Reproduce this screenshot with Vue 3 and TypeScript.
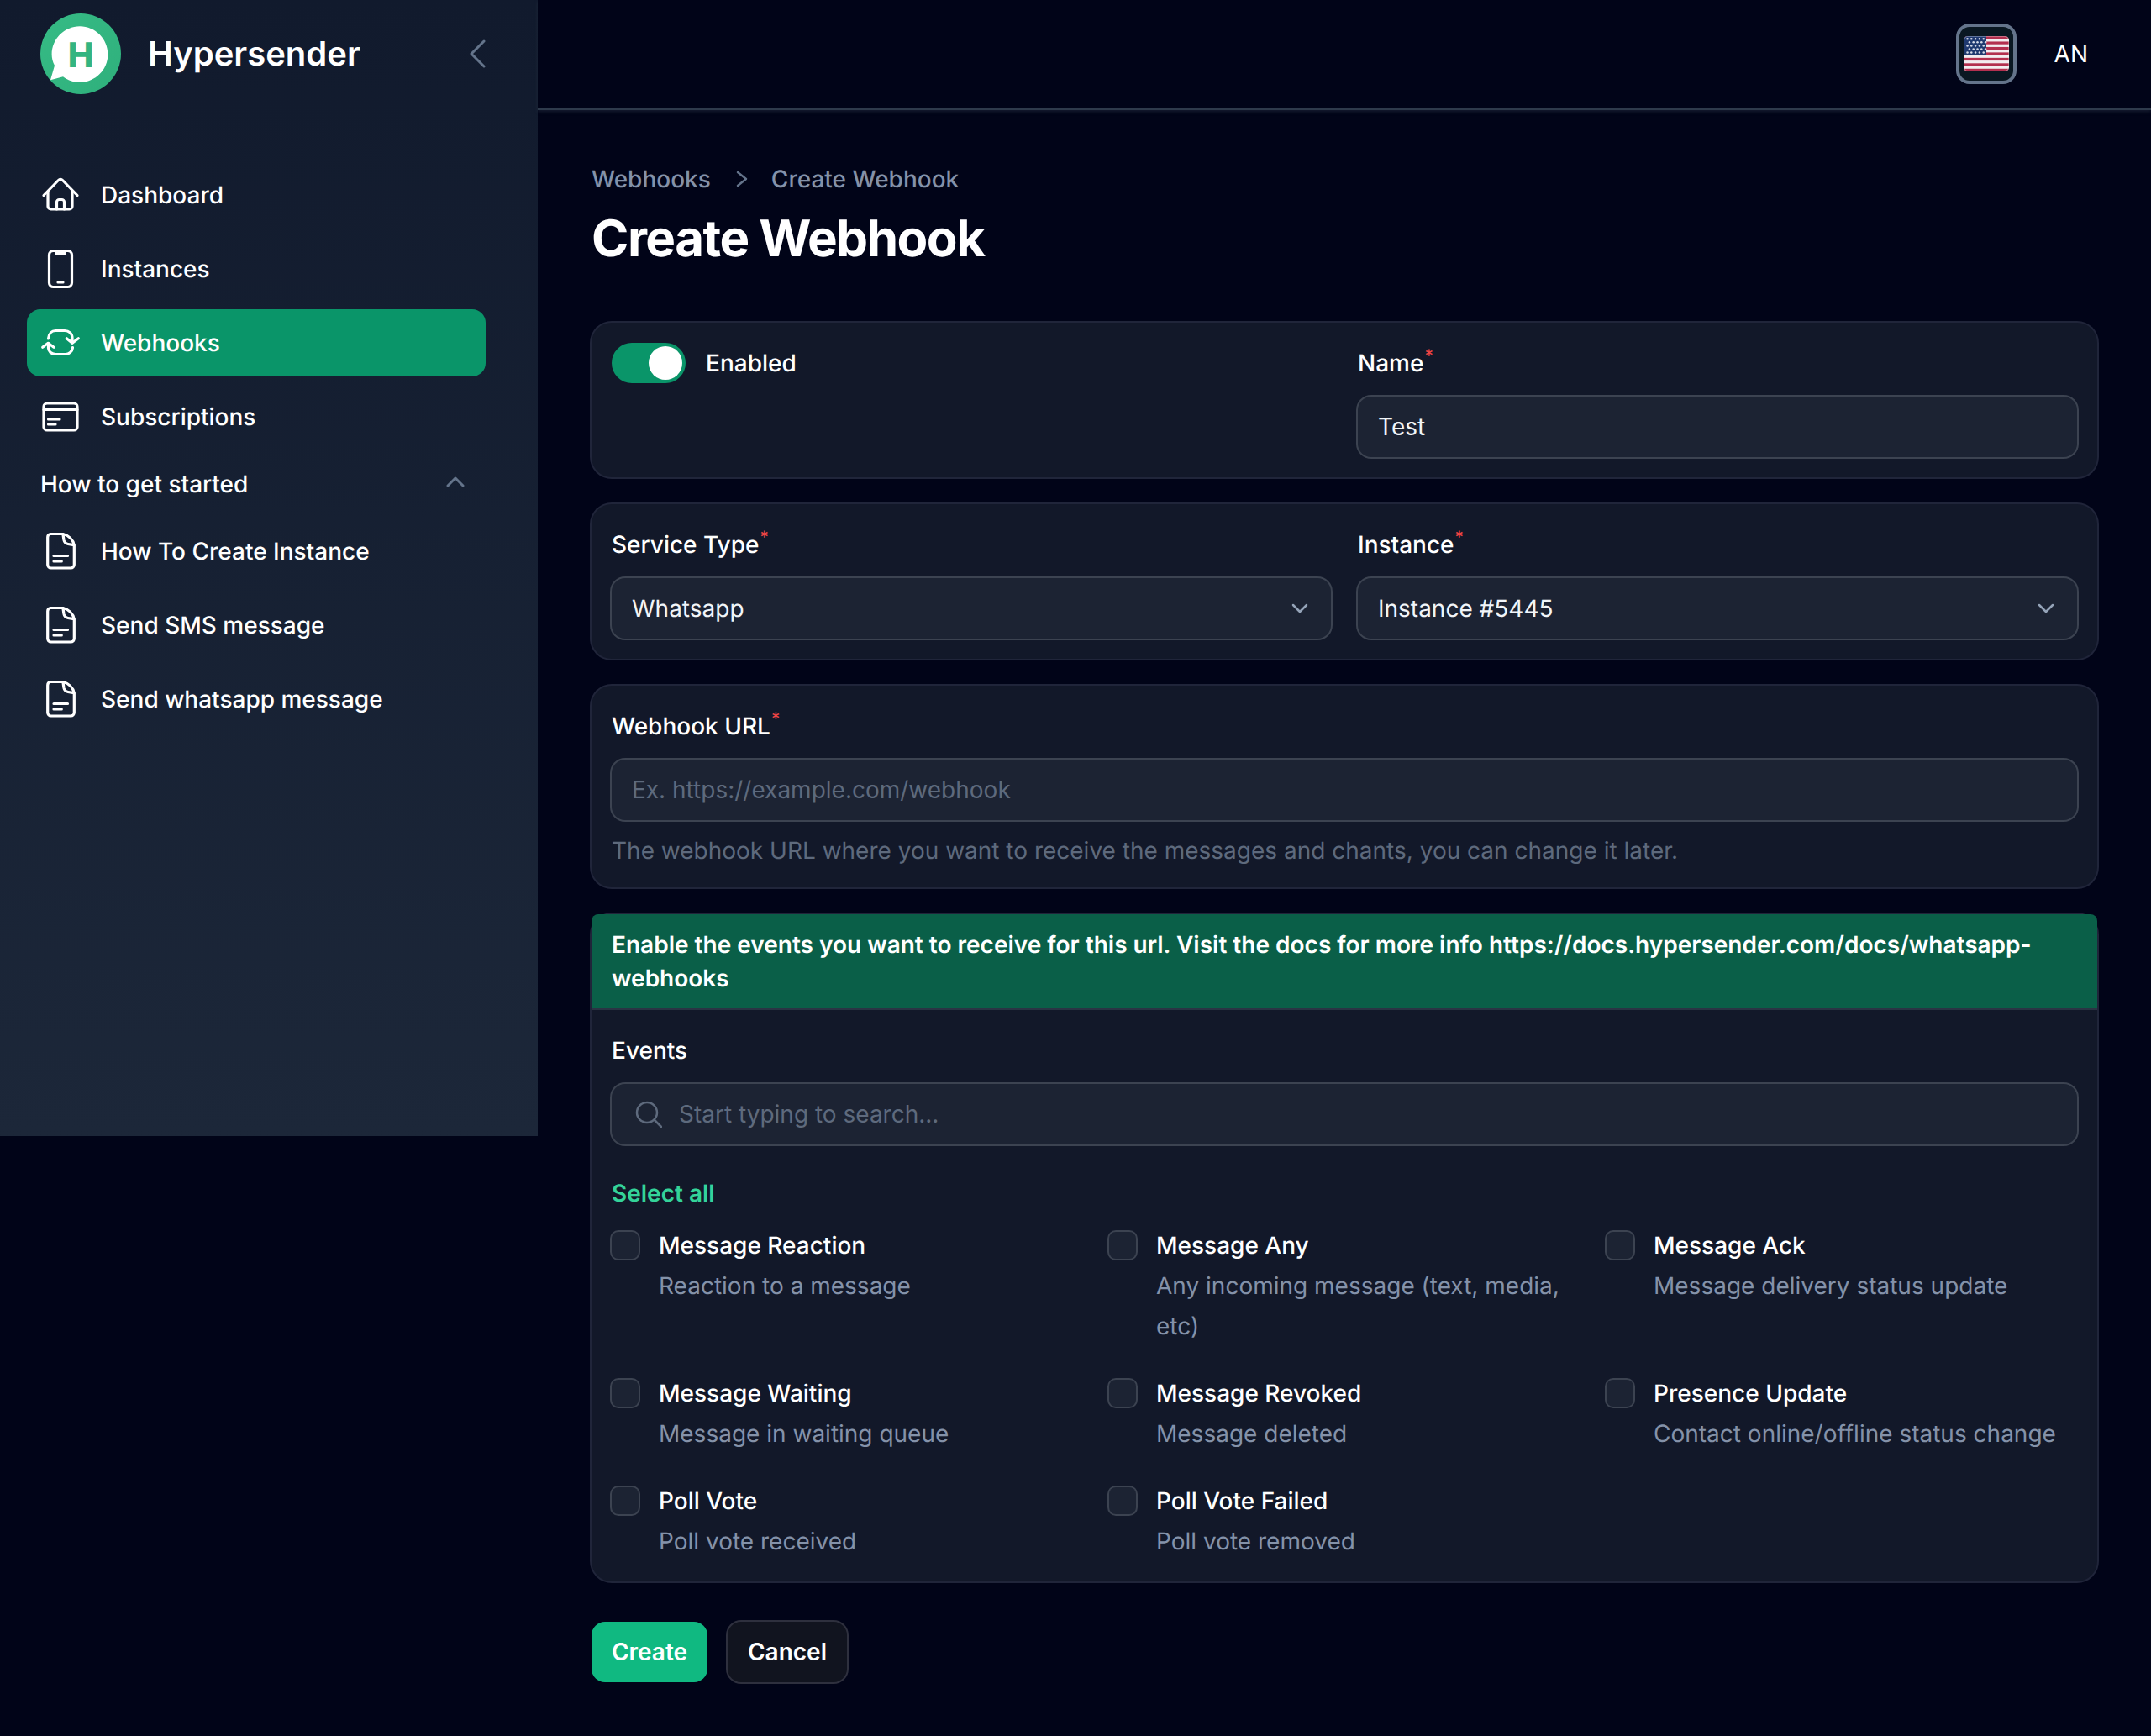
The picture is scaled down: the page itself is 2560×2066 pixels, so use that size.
<script setup lang="ts">
interface NavItem { label: string; icon: 'home' | 'phone' | 'sync' | 'card' | 'doc'; active?: boolean }
interface EventItem { title: string; desc: string }

const mainNav: NavItem[] = [
  { label: 'Dashboard', icon: 'home' },
  { label: 'Instances', icon: 'phone' },
  { label: 'Webhooks', icon: 'sync', active: true },
  { label: 'Subscriptions', icon: 'card' },
]
const guideNav: NavItem[] = [
  { label: 'How To Create Instance', icon: 'doc' },
  { label: 'Send SMS message', icon: 'doc' },
  { label: 'Send whatsapp message', icon: 'doc' },
]
const events: EventItem[] = [
  { title: 'Message Reaction', desc: 'Reaction to a message' },
  { title: 'Message Any', desc: 'Any incoming message (text, media, etc)' },
  { title: 'Message Ack', desc: 'Message delivery status update' },
  { title: 'Message Waiting', desc: 'Message in waiting queue' },
  { title: 'Message Revoked', desc: 'Message deleted' },
  { title: 'Presence Update', desc: 'Contact online/offline status change' },
  { title: 'Poll Vote', desc: 'Poll vote received' },
  { title: 'Poll Vote Failed', desc: 'Poll vote removed' },
]
const stripes = [0, 2, 4, 6, 8, 10, 12]
const stars: number[][] = []
for (let r = 0; r < 5; r++) {
  for (let c = 0; c < 5; c++) {
    stars.push([4.5 + c * 4.8 + (r % 2 ? 2.4 : 0), 3.2 + r * 4.1])
  }
}
</script>

<template>
  <div class="page">
    <aside class="sidebar">
      <div class="brand">
        <svg class="logo" viewBox="0 0 96 96">
          <defs>
            <linearGradient id="lg" x1="0" y1="0" x2="1" y2="1">
              <stop offset="0" stop-color="#36bb85" />
              <stop offset="1" stop-color="#2fb07c" />
            </linearGradient>
          </defs>
          <circle cx="48" cy="48" r="48" fill="url(#lg)" />
          <path d="M47 15.200c18.500 0 33.400 15 33.400 33.400S65.500 82 47 82c-7.500 0-14.500-2.400-20-6.700L12 79.300 17 62c-2.300-4.200-3.400-8.700-3.400-13.400C13.600 30.200 28.500 15.200 47 15.200z" fill="#fff" />
          <text x="48" y="63.700" text-anchor="middle" class="logo-h">H</text>
        </svg>
        <span class="brand-name">Hypersender</span>
        <svg class="collapse" viewBox="0 0 20 34"><path d="M18 2 3 17l15 15" /></svg>
      </div>

      <nav class="nav">
        <a v-for="item in mainNav" :key="item.label" class="nav-item" :class="{ active: item.active }">
          <svg class="nav-icon" viewBox="0 0 48 48">
            <template v-if="item.icon === 'home'">
              <path d="M4 24.500 21.500 6.500a3.500 3.500 0 0 1 5 0L44 24.500" />
              <path d="M9 20v17.500a3.500 3.500 0 0 0 3.500 3.500h22a3.500 3.500 0 0 0 3.500-3.500V20" />
              <path d="M19.500 41v-8.500a3 3 0 0 1 3-3h3a3 3 0 0 1 3 3V41" />
            </template>
            <template v-else-if="item.icon === 'phone'">
              <rect x="10.500" y="2.500" width="27" height="43" rx="5" />
              <path d="M19 3.500h10v1.500a1.500 1.500 0 0 1-1.500 1.500h-7A1.500 1.500 0 0 1 19 5zM21 40h6" />
            </template>
            <template v-else-if="item.icon === 'sync'">
              <path d="M9.500 19C10 12.500 14 9.500 18 9.500H29C34 9.500 38 13 38 18V24" />
              <path d="M31.300 18.700 38 24.300l7.300-5.600" />
              <path d="M38.500 29.500C38 34.500 34 37.500 30 37.500H18C13 37.500 9.500 34 9.500 30V24.500" />
              <path d="M2.700 29.300 9.300 24.300l6.700 5" />
            </template>
            <template v-else>
              <rect x="4" y="8" width="40" height="32" rx="4" />
              <path d="M4 15.500h40M9.500 27H23M9.500 33H18" />
            </template>
          </svg>
          <span>{{ item.label }}</span>
        </a>
      </nav>

      <div class="group-head">
        <span>How to get started</span>
        <svg class="group-chev" viewBox="0 0 22 14"><path d="M2 12 11 3l9 9" /></svg>
      </div>

      <nav class="nav">
        <a v-for="item in guideNav" :key="item.label" class="nav-item">
          <svg class="nav-icon" viewBox="0 0 48 48">
            <path d="M12 3.500h15c7 2 12 7 13.300 13.500V40a4 4 0 0 1-4 4H12.700a4 4 0 0 1-4-4V7.500a4 4 0 0 1 3.300-4z" />
            <path d="M27 4l1 6.700c.5 2.600 2.400 4.300 5 4.800l7 1.200M16 29.500h16.500M16 36h9.300" />
          </svg>
          <span>{{ item.label }}</span>
        </a>
      </nav>
    </aside>

    <div class="content">
      <header class="topbar">
        <button class="flag-btn" type="button" aria-label="Language">
          <svg class="flag" viewBox="0 0 54 42">
            <defs><clipPath id="fc"><rect width="54" height="42" rx="5" /></clipPath></defs>
            <g clip-path="url(#fc)">
              <rect width="54" height="42" fill="#f2edf0" />
              <rect v-for="s in stripes" :key="s" x="0" :y="s * 3.231" width="54" height="3.231" fill="#b3304f" />
              <rect width="27" height="22.600" fill="#1f3a70" />
              <circle v-for="(p, i) in stars" :key="i" :cx="p[0]" :cy="p[1]" r="1.250" fill="#d5dbe8" />
            </g>
            <rect x="0.500" y="0.500" width="53" height="41" rx="4.500" fill="none" stroke="#fff" stroke-opacity="0.3" />
          </svg>
        </button>
        <span class="avatar">AN</span>
      </header>

      <main class="main">
        <div class="crumbs">
          <span>Webhooks</span>
          <svg class="crumb-chev" viewBox="0 0 14 20"><path d="M2 2l10 8-10 8" /></svg>
          <span class="crumb-current">Create Webhook</span>
        </div>
        <h1>Create Webhook</h1>

        <form class="form" @submit.prevent>
          <section class="card two">
            <div class="toggle-row">
              <span class="toggle"><span class="knob"></span></span>
              <span class="label">Enabled</span>
            </div>
            <div class="field">
              <label class="label">Name<sup>*</sup></label>
              <input class="control" type="text" value="Test" />
            </div>
          </section>

          <section class="card two">
            <div class="field">
              <label class="label">Service Type<sup>*</sup></label>
              <div class="control select">
                <span>Whatsapp</span>
                <svg viewBox="0 0 22 14"><path d="M3 3l8 8 8-8" /></svg>
              </div>
            </div>
            <div class="field">
              <label class="label">Instance<sup>*</sup></label>
              <div class="control select">
                <span>Instance #5445</span>
                <svg viewBox="0 0 22 14"><path d="M3 3l8 8 8-8" /></svg>
              </div>
            </div>
          </section>

          <section class="card">
            <div class="field">
              <label class="label">Webhook URL<sup>*</sup></label>
              <input class="control" type="text" placeholder="Ex. https://example.com/webhook" />
              <p class="help">The webhook URL where you want to receive the messages and chants, you can change it later.</p>
            </div>
          </section>

          <section class="card events-card">
            <div class="banner">Enable the events you want to receive for this url. Visit the docs for more info https://docs.hypersender.com/docs/whatsapp-webhooks</div>
            <div class="events-body">
              <label class="label">Events</label>
              <div class="control search">
                <svg viewBox="0 0 32 32"><circle cx="14" cy="14" r="12" /><path d="M23 23l8 8" /></svg>
                <input type="text" placeholder="Start typing to search..." />
              </div>
              <a class="select-all">Select all</a>
              <div class="event-grid">
                <label v-for="ev in events" :key="ev.title" class="event">
                  <span class="check"></span>
                  <span class="event-text">
                    <span class="event-title">{{ ev.title }}</span>
                    <span class="event-desc">{{ ev.desc }}</span>
                  </span>
                </label>
              </div>
            </div>
          </section>

          <div class="actions">
            <button class="btn primary" type="submit">Create</button>
            <button class="btn ghost" type="button">Cancel</button>
          </div>
        </form>
      </main>
    </div>
  </div>
</template>

<style scoped>
* { box-sizing: border-box; }
.page {
  display: flex;
  align-items: flex-start;
  min-height: 2066px;
  font-family: Inter, "Noto Sans", sans-serif;
  font-size: 28px;
  color: #fff;
  text-rendering: geometricPrecision;
}
.sidebar {
  width: 640px;
  height: 1352px;
  flex: none;
  padding: 16px 0 0;
  background: linear-gradient(180deg, #111a2d 0%, #1c2739 100%);
}
.brand {
  display: flex;
  align-items: center;
  height: 96px;
  padding-left: 48px;
}
.logo { width: 96px; height: 96px; flex: none; }
.logo-h { font: 800 41px Inter, sans-serif; fill: #33b580; }
.brand-name {
  margin-left: 32px;
  width: 382px;
  flex: none;
  font-size: 40px;
  line-height: 48px;
  font-weight: 600;
}
.collapse { width: 20px; height: 34px; flex: none; }
.collapse path, .group-chev path {
  fill: none; stroke: #64748b; stroke-width: 3; stroke-linecap: round; stroke-linejoin: round;
}
.nav {
  display: flex;
  flex-direction: column;
  gap: 8px;
  margin: 0 62px 0 32px;
}
.brand + .nav { margin-top: 80px; }
.nav-item {
  display: flex;
  align-items: center;
  height: 80px;
  padding-left: 16px;
  border-radius: 16px;
  font-weight: 500;
  line-height: 40px;
}
.nav-item.active { background: #0a9569; }
.nav-icon {
  width: 48px;
  height: 48px;
  margin-right: 24px;
  flex: none;
  fill: none;
  stroke: #fff;
  stroke-width: 3.200;
  stroke-linecap: round;
  stroke-linejoin: round;
}
.group-head {
  display: flex;
  align-items: center;
  justify-content: space-between;
  height: 64px;
  margin: 8px 0;
  padding: 0 87px 0 48px;
  font-weight: 500;
}
.group-chev { width: 22px; height: 14px; margin-top: -6px; }

.content { flex: 1; min-width: 0; }
.topbar {
  display: flex;
  align-items: center;
  justify-content: flex-end;
  height: 131px;
  padding: 0 75px 0 0;
  border-bottom: 3px solid #2e3a4b;
  box-shadow: 0 2px 4px rgba(46, 58, 75, 0.45);
}
.flag-btn {
  display: flex;
  align-items: center;
  justify-content: center;
  width: 72px;
  height: 72px;
  padding: 0;
  background: #0a1822;
  border: 4px solid #64748b;
  border-radius: 16px;
}
.flag { width: 54px; height: 42px; }
.avatar { margin-left: 45px; font-weight: 400; line-height: 40px; }

.main { padding: 62px 64px 0; }
.crumbs {
  display: flex;
  align-items: center;
  height: 40px;
  gap: 30px;
  color: #8492a9;
  font-weight: 500;
}
.crumb-chev { width: 14px; height: 20px; fill: none; stroke: #64748b; stroke-width: 2.500; stroke-linecap: round; stroke-linejoin: round; }
.crumb-current { margin-left: -2px; }
h1 {
  margin: 16px 0 0;
  font-size: 60px;
  line-height: 70px;
  font-weight: 700;
  letter-spacing: -1.500px;
}
.form { display: flex; flex-direction: column; margin-top: 65px; gap: 32px; }
.card {
  background: #121829;
  box-shadow: 0 0 0 2px #20253a;
  border-radius: 24px;
  padding: 24px;
}
.two { display: grid; grid-template-columns: 1fr 1fr; gap: 32px; align-items: start; }
.toggle-row { display: flex; align-items: center; gap: 24px; height: 48px; }
.toggle {
  position: relative;
  width: 88px;
  height: 48px;
  border-radius: 24px;
  background: #0a9569;
  flex: none;
}
.knob {
  position: absolute;
  top: 4px;
  left: 44px;
  width: 40px;
  height: 40px;
  border-radius: 50%;
  background: #fff;
}
.field { display: flex; flex-direction: column; min-width: 0; }
.label { font-weight: 500; line-height: 48px; display: block; }
.label sup { color: #ef4444; font-size: 20px; line-height: 0; vertical-align: 12px; margin-left: 1px; }
.control {
  width: 100%;
  height: 72px;
  margin-top: 16px;
  background: #1c2333;
  border: 0;
  box-shadow: 0 0 0 2px #3c4351;
  border-radius: 16px;
  padding: 0 24px;
  color: #f1f5f9;
  font: 400 28px Inter, sans-serif;
  outline: none;
}
.control::placeholder, .search input::placeholder { color: #5e6a7d; opacity: 1; }
.select { display: flex; align-items: center; justify-content: space-between; }
.select svg { width: 22px; height: 14px; margin-right: 2px; fill: none; stroke: #94a3b8; stroke-width: 2.500; stroke-linecap: round; stroke-linejoin: round; }
.help { margin: 16px 0 0; color: #5e6a7d; line-height: 40px; }
.events-card { padding: 0; }
.banner {
  padding: 16px 24px;
  background: #0a5f48;
  border-radius: 8px 8px 0 0;
  font-weight: 600;
  line-height: 40px;
}
.events-body { padding: 24px; border-top: 2px solid #2a3444; }
.search { display: flex; align-items: center; gap: 20px; padding-left: 28px; }
.search svg { width: 32px; height: 32px; flex: none; fill: none; stroke: #5e6a7d; stroke-width: 2.500; stroke-linecap: round; }
.search input {
  flex: 1;
  min-width: 0;
  height: 100%;
  border: 0;
  outline: 0;
  padding: 0;
  background: transparent;
  color: #f1f5f9;
  font: 400 28px Inter, sans-serif;
}
.select-all {
  display: block;
  margin-top: 34px;
  color: #34d399;
  font-weight: 600;
  line-height: 48px;
}
.event-grid {
  display: grid;
  grid-template-columns: repeat(3, 1fr);
  gap: 32px;
  margin-top: 14px;
}
.event { display: flex; gap: 24px; align-items: flex-start; }
.check {
  flex: none;
  width: 32px;
  height: 32px;
  margin-top: 8px;
  box-shadow: 0 0 0 2px #3c4351;
  border-radius: 8px;
  background: #1c2333;
}
.event-text { display: flex; flex-direction: column; line-height: 48px; }
.event-title { font-weight: 500; }
.event-desc { color: #8492a9; }
.actions { display: flex; align-items: center; gap: 24px; margin-top: 16px; }
.btn {
  height: 72px;
  border: 0;
  border-radius: 16px;
  color: #fff;
  font: 600 28px Inter, sans-serif;
}
.primary { width: 138px; background: #10b981; }
.ghost { width: 142px; background: #11141f; box-shadow: 0 0 0 2px #2e303e; }
</style>

<style>
html, body { background: #010418; margin: 0; }
</style>
